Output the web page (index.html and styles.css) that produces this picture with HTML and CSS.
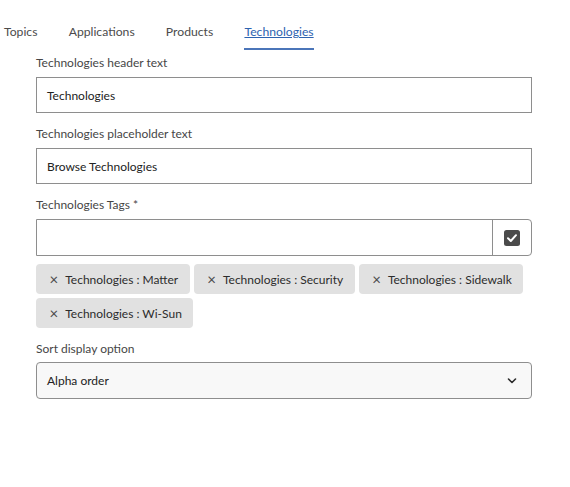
FILE: index.html
```html
<!DOCTYPE html>
<html>
<head>
<meta charset="utf-8">
<link rel="stylesheet" href="styles.css">
</head>
<body>
<nav class="tabs">
  <span class="tab">Topics</span>
  <span class="tab">Applications</span>
  <span class="tab">Products</span>
  <span class="tab active">Technologies</span>
</nav>
<main class="form">
  <div class="field">
    <label class="label">Technologies header text</label>
    <div class="input">Technologies</div>
  </div>
  <div class="field">
    <label class="label">Technologies placeholder text</label>
    <div class="input">Browse Technologies</div>
  </div>
  <div class="field">
    <label class="label">Technologies Tags *</label>
    <div class="taginput">
      <div class="taginput-text"></div>
      <div class="taginput-btn">
        <svg width="16" height="16" viewBox="0 0 16 16"><rect x="0" y="0" width="16" height="16" rx="2.5" fill="#4b4b4b"/><path d="M4 8.3 L6.8 11 L12 5.2" fill="none" stroke="#fff" stroke-width="2" stroke-linecap="round" stroke-linejoin="round"/></svg>
      </div>
    </div>
    <div class="tags">
      <span class="tag"><span class="x">×</span>Technologies : Matter</span>
      <span class="tag"><span class="x">×</span>Technologies : Security</span>
      <span class="tag"><span class="x">×</span>Technologies : Sidewalk</span>
      <span class="tag"><span class="x">×</span>Technologies : Wi-Sun</span>
    </div>
  </div>
  <div class="field">
    <label class="label">Sort display option</label>
    <div class="select">
      <span>Alpha order</span>
      <svg width="10" height="6" viewBox="0 0 10 6"><path d="M1.5 1 L5 4.5 L8.5 1" fill="none" stroke="#2c2c2c" stroke-width="1.6" stroke-linecap="round" stroke-linejoin="round"/></svg>
    </div>
  </div>
</main>
</body>
</html>
```
FILE: styles.css
```css
* { box-sizing: border-box; }
body {
  margin: 0;
  font-family: Lato, "Liberation Sans", sans-serif;
  font-size: 12px;
  color: #222;
  background: #fff;
}
.tabs {
  display: flex;
  gap: 31.2px;
  padding: 23px 0 0 4px;
}
.tab {
  font-size: 12.2px;
  line-height: 18px;
  height: 27px;
  color: #4b4b4b;
  border-bottom: 2px solid transparent;
}
.tab.active {
  color: #2d63b0;
  text-decoration: underline;
  border-bottom-color: #4b75b9;
}
.form {
  width: 496px;
  margin-left: 36px;
  padding-top: 3px;
  display: flex;
  flex-direction: column;
  gap: 11px;
}
.field {
  display: flex;
  flex-direction: column;
}
.label {
  line-height: 18px;
  padding-top: 1px;
  color: #464646;
  margin-bottom: 5px;
}
.input {
  height: 36px;
  border: 1px solid #8e8e8e;
  padding: 0 10px;
  display: flex;
  align-items: center;
  background: #fff;
}
.taginput {
  display: flex;
  height: 37px;
  border: 1px solid #8e8e8e;
  border-radius: 0 4px 4px 0;
}
.taginput-text { flex: 1; }
.taginput-btn {
  width: 39px;
  border-left: 1px solid #8e8e8e;
  display: flex;
  align-items: center;
  justify-content: center;
}
.tags {
  display: flex;
  flex-wrap: wrap;
  gap: 4px;
  margin-top: 8px;
}
.tag {
  height: 30px;
  display: flex;
  align-items: center;
  padding: 0 11.5px 0 13.5px;
  background: #e1e1e1;
  border-radius: 4px;
  color: #2c2c2c;
}
.tag .x {
  font-size: 15px;
  color: #4b4b4b;
  margin-right: 7px;
}
.select {
  height: 37px;
  border: 1px solid #8e8e8e;
  border-radius: 4px;
  background: #f8f8f8;
  padding: 0 14px 0 10px;
  display: flex;
  align-items: center;
  justify-content: space-between;
  margin-top: -1px;
}
```
